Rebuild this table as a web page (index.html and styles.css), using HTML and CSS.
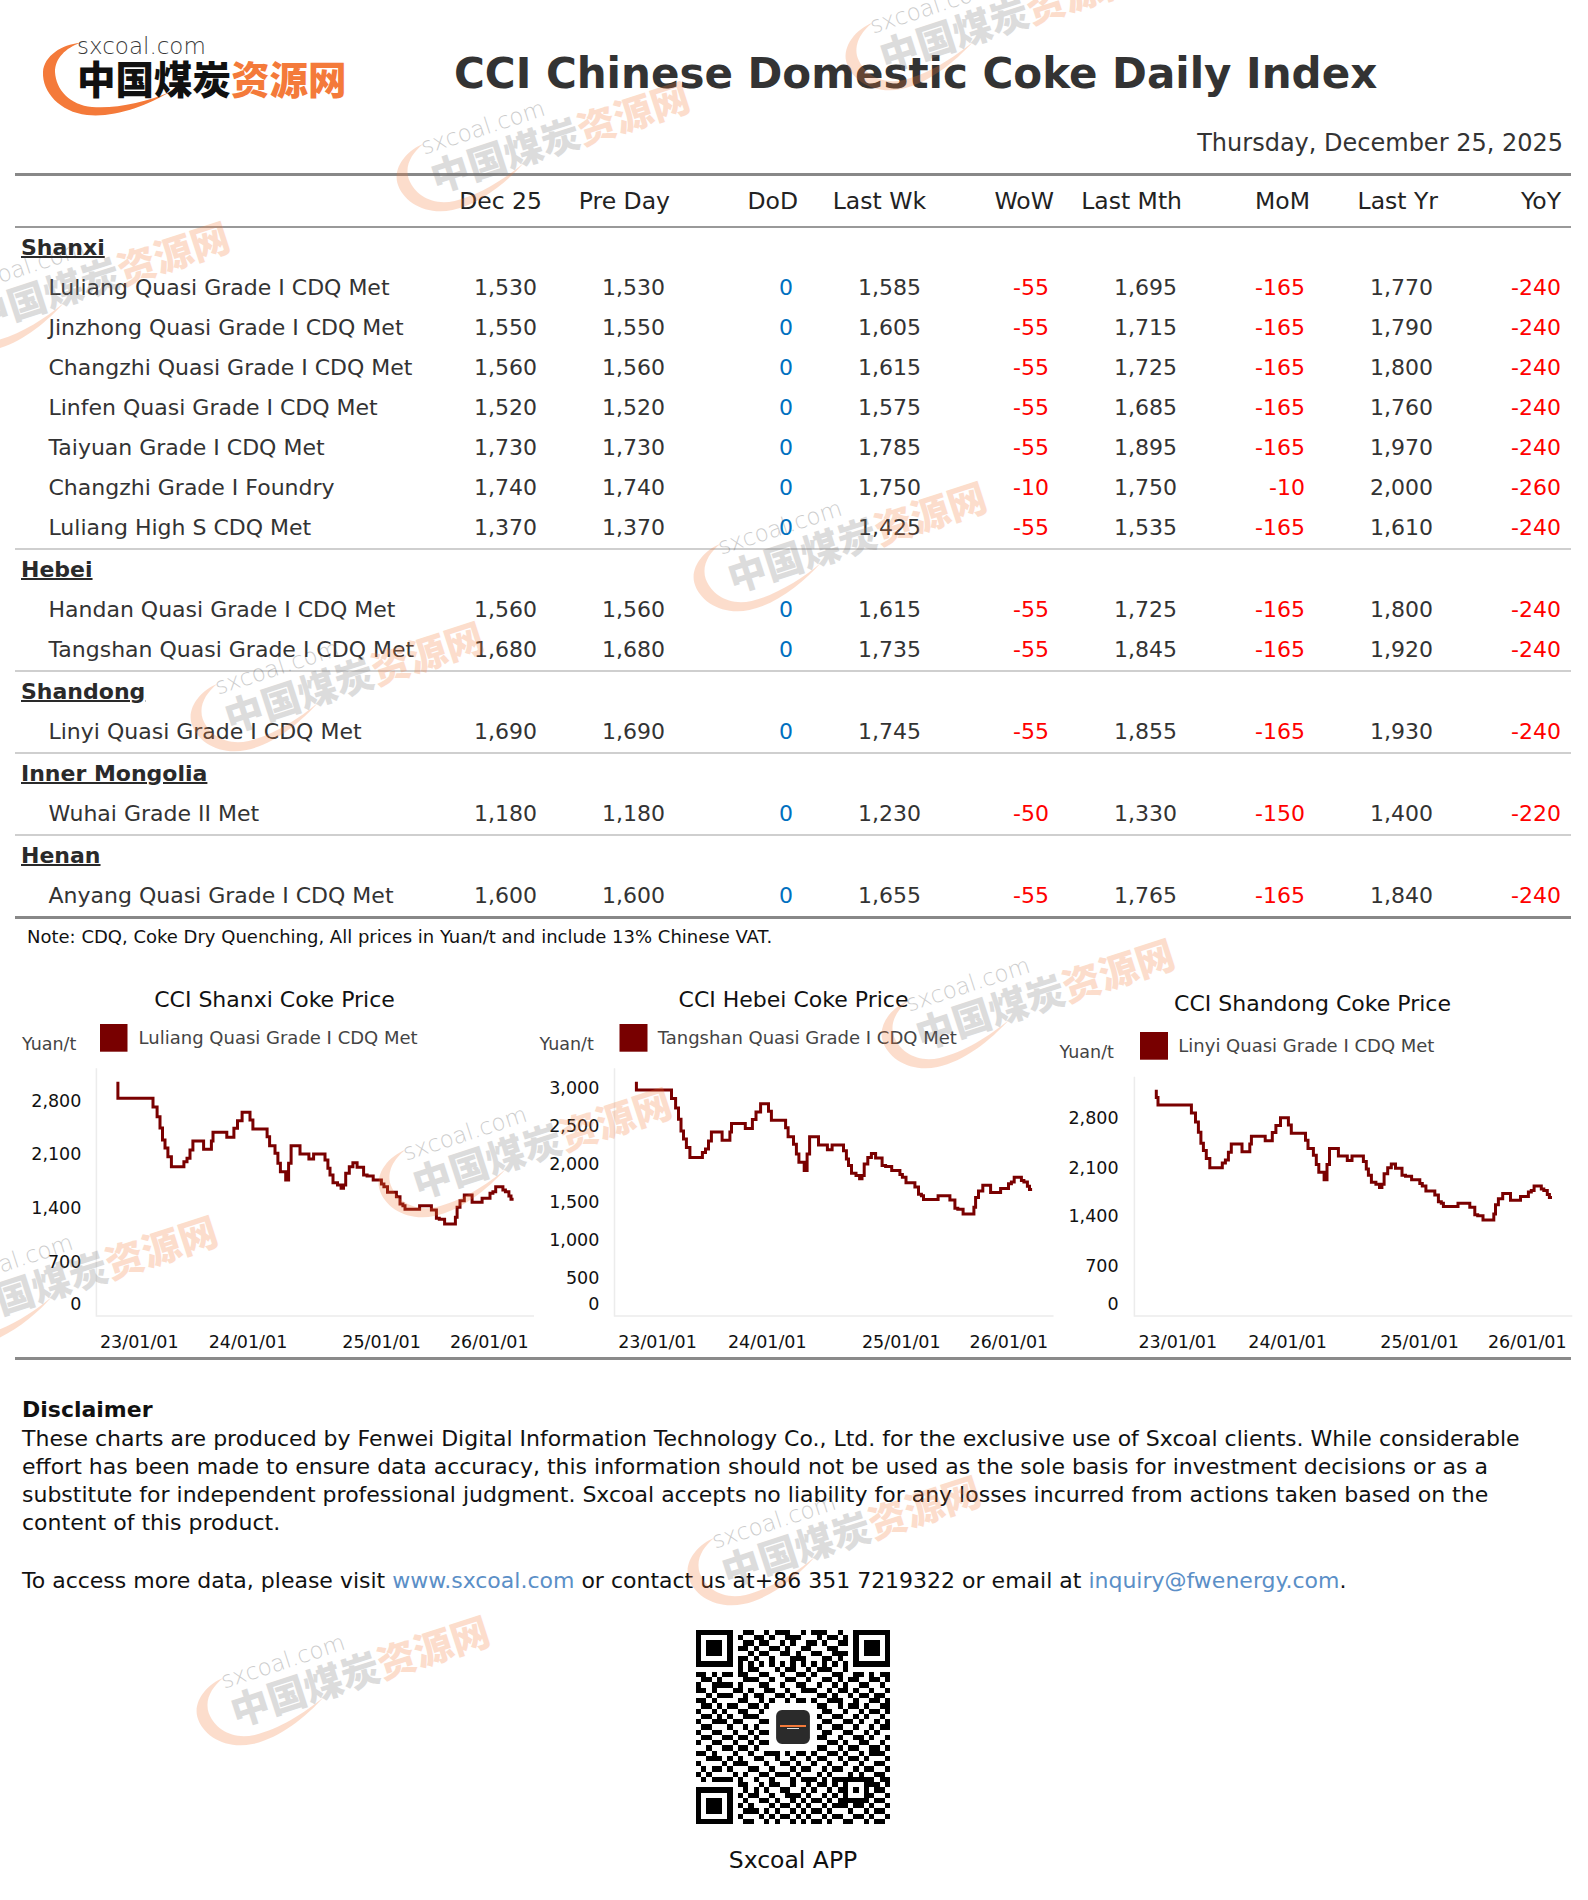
FILE: index.html
```html
<!DOCTYPE html>
<html lang="en">
<head>
<meta charset="utf-8">
<title>CCI Chinese Domestic Coke Daily Index</title>
<link rel="stylesheet" href="styles.css">
</head>
<body>
<div class="page">
  <header class="header">
    <svg class="logo" viewBox="0 0 310 84" width="310" height="84">
      <g id="sxlogo">
        <path class="lg-arc" d="M38 9 C20 10 2 22 1 38 C0 58 18 78 45 81 C72 84 104 72 128 58 C104 68 74 75 50 73 C28 71 14 56 13 38 C13 24 24 14 38 9 Z"/>
        <text class="lg-text"><tspan class="lg-url" x="35" y="19.5">sxcoal.com</tspan><tspan class="lg-cn lg-dark" x="35" y="59.5">中国煤炭</tspan><tspan class="lg-cn lg-orange">资源网</tspan></text>
      </g>
    </svg>
    <h1 class="title">CCI Chinese Domestic Coke Daily Index</h1>
  </header>
  <div class="date">Thursday, December 25, 2025</div>

  <div class="table">
    <div class="row thead">
      <div></div>
      <div class="num">Dec 25</div><div class="num">Pre Day</div><div class="num">DoD</div>
      <div class="num">Last Wk</div><div class="num">WoW</div><div class="num">Last Mth</div>
      <div class="num">MoM</div><div class="num">Last Yr</div><div class="num">YoY</div>
    </div>

    <div class="group">
      <div class="group-title"><span>Shanxi</span></div>
      <div class="row"><div class="name">Luliang Quasi Grade I CDQ Met</div><div class="num">1,530</div><div class="num">1,530</div><div class="num zero">0</div><div class="num">1,585</div><div class="num neg">-55</div><div class="num">1,695</div><div class="num neg">-165</div><div class="num">1,770</div><div class="num neg">-240</div></div>
      <div class="row"><div class="name">Jinzhong Quasi Grade I CDQ Met</div><div class="num">1,550</div><div class="num">1,550</div><div class="num zero">0</div><div class="num">1,605</div><div class="num neg">-55</div><div class="num">1,715</div><div class="num neg">-165</div><div class="num">1,790</div><div class="num neg">-240</div></div>
      <div class="row"><div class="name">Changzhi Quasi Grade I CDQ Met</div><div class="num">1,560</div><div class="num">1,560</div><div class="num zero">0</div><div class="num">1,615</div><div class="num neg">-55</div><div class="num">1,725</div><div class="num neg">-165</div><div class="num">1,800</div><div class="num neg">-240</div></div>
      <div class="row"><div class="name">Linfen Quasi Grade I CDQ Met</div><div class="num">1,520</div><div class="num">1,520</div><div class="num zero">0</div><div class="num">1,575</div><div class="num neg">-55</div><div class="num">1,685</div><div class="num neg">-165</div><div class="num">1,760</div><div class="num neg">-240</div></div>
      <div class="row"><div class="name">Taiyuan Grade I CDQ Met</div><div class="num">1,730</div><div class="num">1,730</div><div class="num zero">0</div><div class="num">1,785</div><div class="num neg">-55</div><div class="num">1,895</div><div class="num neg">-165</div><div class="num">1,970</div><div class="num neg">-240</div></div>
      <div class="row"><div class="name">Changzhi Grade I Foundry</div><div class="num">1,740</div><div class="num">1,740</div><div class="num zero">0</div><div class="num">1,750</div><div class="num neg">-10</div><div class="num">1,750</div><div class="num neg">-10</div><div class="num">2,000</div><div class="num neg">-260</div></div>
      <div class="row"><div class="name">Luliang High S CDQ Met</div><div class="num">1,370</div><div class="num">1,370</div><div class="num zero">0</div><div class="num">1,425</div><div class="num neg">-55</div><div class="num">1,535</div><div class="num neg">-165</div><div class="num">1,610</div><div class="num neg">-240</div></div>
    </div>

    <div class="group">
      <div class="group-title"><span>Hebei</span></div>
      <div class="row"><div class="name">Handan Quasi Grade I CDQ Met</div><div class="num">1,560</div><div class="num">1,560</div><div class="num zero">0</div><div class="num">1,615</div><div class="num neg">-55</div><div class="num">1,725</div><div class="num neg">-165</div><div class="num">1,800</div><div class="num neg">-240</div></div>
      <div class="row"><div class="name">Tangshan Quasi Grade I CDQ Met</div><div class="num">1,680</div><div class="num">1,680</div><div class="num zero">0</div><div class="num">1,735</div><div class="num neg">-55</div><div class="num">1,845</div><div class="num neg">-165</div><div class="num">1,920</div><div class="num neg">-240</div></div>
    </div>

    <div class="group">
      <div class="group-title"><span>Shandong</span></div>
      <div class="row"><div class="name">Linyi Quasi Grade I CDQ Met</div><div class="num">1,690</div><div class="num">1,690</div><div class="num zero">0</div><div class="num">1,745</div><div class="num neg">-55</div><div class="num">1,855</div><div class="num neg">-165</div><div class="num">1,930</div><div class="num neg">-240</div></div>
    </div>

    <div class="group">
      <div class="group-title"><span>Inner Mongolia</span></div>
      <div class="row"><div class="name">Wuhai Grade II Met</div><div class="num">1,180</div><div class="num">1,180</div><div class="num zero">0</div><div class="num">1,230</div><div class="num neg">-50</div><div class="num">1,330</div><div class="num neg">-150</div><div class="num">1,400</div><div class="num neg">-220</div></div>
    </div>

    <div class="group">
      <div class="group-title"><span>Henan</span></div>
      <div class="row"><div class="name">Anyang Quasi Grade I CDQ Met</div><div class="num">1,600</div><div class="num">1,600</div><div class="num zero">0</div><div class="num">1,655</div><div class="num neg">-55</div><div class="num">1,765</div><div class="num neg">-165</div><div class="num">1,840</div><div class="num neg">-240</div></div>
    </div>
  </div>

  <div class="note">Note: CDQ, Coke Dry Quenching, All prices in Yuan/t and include 13% Chinese VAT.</div>

  <div class="charts">
    <svg class="chart" viewBox="0 0 519 397" width="519" height="397">
      <text class="c-title" x="257.5" y="46.7" text-anchor="middle">CCI Shanxi Coke Price</text>
      <rect class="c-key" x="83" y="64" width="27.5" height="27.7"/>
      <text class="c-legend" x="121.6" y="84">Luliang Quasi Grade I CDQ Met</text>
      <text class="c-unit" x="5" y="90">Yuan/t</text>
      <g class="c-ytick" text-anchor="end">
        <text x="64.4" y="146.7">2,800</text>
        <text x="64.4" y="200">2,100</text>
        <text x="64.4" y="254.3">1,400</text>
        <text x="64.4" y="308.3">700</text>
        <text x="64.4" y="350">0</text>
      </g>
      <path class="c-axis" d="M79.4 108.3V356H517"/>
      <g class="c-xtick" text-anchor="middle">
        <text x="122.3" y="388.3">23/01/01</text>
        <text x="231" y="388.3">24/01/01</text>
        <text x="364.6" y="388.3">25/01/01</text>
        <text x="472.3" y="388.3">26/01/01</text>
      </g>
      <path class="c-line" transform="translate(-17 0)" d="M117.9 121.7V138.3H149.3H153V147H157.1V156.7H160V168H162.5V180H165V188H167.9V196.7H171.4V206.7H183.9V201.7H187V198.3H190V190H192.9V181H203.6V189.3H211.4V181H213V172.3H226.8V177.3H233.9V168.3H237.5V160.7H242.1V152.3H250V160H252.9V169H267.1V176.7H269.6V185.7H275V193.3H277.9V203.3H280.4V211.7H285.7V220H288.6V203.3H291.1V185.7H300V194H308.9V199H313.6V194H325V200H327.9V208.3H330V215H333V222.7H337.5V225H341.1V228.3H343.5V225H345.7V213.3H349.3V206.7H352.9V202.7H357.1V207.3H363.6V215H367.1V216H373.2V220H381.4V224H383.9V226.7H387.5V232.3H396.4V236.7H400V244H402.9V245.7H405V249.3H419.6V245.7H431.4V250H436.4V258.3H439.3V259.3H444.6V264H455.4V257.3H457.1V247.3H460V240.7H464.3V235H472.1V242.3H482.1V238.3H490V233.3H492.9V231.7H495.7V226.7H502.9V230H505.4V231.7H508.9V236H511V239.3H513.6"/>
    </svg>

    <svg class="chart" viewBox="0 0 519 397" width="519" height="397">
      <text class="c-title" x="257.5" y="46.7" text-anchor="middle">CCI Hebei Coke Price</text>
      <rect class="c-key" x="83.5" y="64" width="28" height="27.7"/>
      <text class="c-legend" x="121.7" y="84">Tangshan Quasi Grade I CDQ Met</text>
      <text class="c-unit" x="3.5" y="90">Yuan/t</text>
      <g class="c-ytick" text-anchor="end">
        <text x="63.3" y="134.3">3,000</text>
        <text x="63.3" y="172.3">2,500</text>
        <text x="63.3" y="210">2,000</text>
        <text x="63.3" y="248.3">1,500</text>
        <text x="63.3" y="286">1,000</text>
        <text x="63.3" y="324">500</text>
        <text x="63.3" y="350">0</text>
      </g>
      <path class="c-axis" d="M78.5 108.3V356H517.6"/>
      <g class="c-xtick" text-anchor="middle">
        <text x="121.5" y="388.3">23/01/01</text>
        <text x="231.3" y="388.3">24/01/01</text>
        <text x="365.3" y="388.3">25/01/01</text>
        <text x="472.9" y="388.3">26/01/01</text>
      </g>
      <path class="c-line" transform="translate(-17.5 -6.4) scale(1 0.986)" d="M117.9 129.9V138.3H149.3H153V147H157.1V156.7H160V168H162.5V180H165V188H167.9V196.7H171.4V206.7H183.9V201.7H187V198.3H190V190H192.9V181H203.6V189.3H211.4V181H213V172.3H226.8V177.3H233.9V168.3H237.5V160.7H242.1V152.3H250V160H252.9V169H267.1V176.7H269.6V185.7H275V193.3H277.9V203.3H280.4V211.7H285.7V220H288.6V203.3H291.1V185.7H300V194H308.9V199H313.6V194H325V200H327.9V208.3H330V215H333V222.7H337.5V225H341.1V228.3H343.5V225H345.7V213.3H349.3V206.7H352.9V202.7H357.1V207.3H363.6V215H367.1V216H373.2V220H381.4V224H383.9V226.7H387.5V232.3H396.4V236.7H400V244H402.9V245.7H405V249.3H419.6V245.7H431.4V250H436.4V258.3H439.3V259.3H444.6V264H455.4V257.3H457.1V247.3H460V240.7H464.3V235H472.1V242.3H482.1V238.3H490V233.3H492.9V231.7H495.7V226.7H502.9V230H505.4V231.7H508.9V236H511V239.3H513.6"/>
    </svg>

    <svg class="chart" viewBox="0 0 519 397" width="519" height="397">
      <text class="c-title" x="257.5" y="50.7" text-anchor="middle">CCI Shandong Coke Price</text>
      <rect class="c-key" x="85" y="72" width="28" height="27.7"/>
      <text class="c-legend" x="123.3" y="92">Linyi Quasi Grade I CDQ Met</text>
      <text class="c-unit" x="4.6" y="97.7">Yuan/t</text>
      <g class="c-ytick" text-anchor="end">
        <text x="63.6" y="164.3">2,800</text>
        <text x="63.6" y="214.3">2,100</text>
        <text x="63.6" y="262.3">1,400</text>
        <text x="63.6" y="311.7">700</text>
        <text x="63.6" y="350">0</text>
      </g>
      <path class="c-axis" d="M79.4 116.7V356H517.3"/>
      <g class="c-xtick" text-anchor="middle">
        <text x="122.8" y="388.3">23/01/01</text>
        <text x="232.6" y="388.3">24/01/01</text>
        <text x="364.6" y="388.3">25/01/01</text>
        <text x="472.3" y="388.3">26/01/01</text>
      </g>
      <path class="c-line" transform="translate(-16.6 18.5) scale(1 0.915)" d="M117.9 121.7V130H119.6V138.3H149.3H153V147H157.1V156.7H160V168H162.5V180H165V188H167.9V196.7H171.4V206.7H183.9V201.7H187V198.3H190V190H192.9V181H203.6V189.3H211.4V181H213V172.3H226.8V177.3H233.9V168.3H237.5V160.7H242.1V152.3H250V160H252.9V169H267.1V176.7H269.6V185.7H275V193.3H277.9V203.3H280.4V211.7H285.7V220H288.6V203.3H291.1V185.7H300V194H308.9V199H313.6V194H325V200H327.9V208.3H330V215H333V222.7H337.5V225H341.1V228.3H343.5V225H345.7V213.3H349.3V206.7H352.9V202.7H357.1V207.3H363.6V215H367.1V216H373.2V220H381.4V224H383.9V226.7H387.5V232.3H396.4V236.7H400V244H402.9V245.7H405V249.3H419.6V245.7H431.4V250H436.4V258.3H439.3V259.3H444.6V264H455.4V257.3H457.1V247.3H460V240.7H464.3V235H472.1V242.3H482.1V238.3H490V233.3H492.9V231.7H495.7V226.7H502.9V230H505.4V231.7H508.9V236H511V239.3H513.6"/>
    </svg>
  </div>

  <div class="rule"></div>

  <section class="disclaimer">
    <div class="disc-title">Disclaimer</div>
    <p class="disc-text">These charts are produced by Fenwei Digital Information Technology Co., Ltd. for the exclusive use of Sxcoal clients. While considerable effort has been made to ensure data accuracy, this information should not be used as the sole basis for investment decisions or as a substitute for independent professional judgment. Sxcoal accepts no liability for any losses incurred from actions taken based on the content of this product.</p>
    <p class="contact">To access more data, please visit <a href="#">www.sxcoal.com</a> or contact us at+86 351 7219322 or email at <a href="#">inquiry@fwenergy.com</a>.</p>
  </section>

  <div class="qr-block">
    <svg class="qr" viewBox="0 0 37 37" width="194" height="194">
      <path class="qr-dark" fill-rule="evenodd" d="M0 0h7v7h-7zM1 1v5h5v-5zM30 0h7v7h-7zM31 1v5h5v-5zM0 30h7v7h-7zM1 31v5h5v-5zM28 28h5v5h-5zM29 29v3h3v-3z"/>
      <path class="qr-dark" d="M2 2h3v3h-3zM32 2h3v3h-3zM2 32h3v3h-3zM30 30h1v1h-1z
M9 0h2v1h-2zM13 0h1v1h-1zM15 0h3v1h-3zM20 0h1v1h-1zM22 0h3v1h-3zM27 0h1v1h-1z
M8 1h1v1h-1zM11 1h2v1h-2zM14 1h1v1h-1zM17 1h3v1h-3zM23 1h1v1h-1zM25 1h2v1h-2zM28 1h1v1h-1z
M9 2h2v1h-2zM12 2h2v1h-2zM16 2h1v1h-1zM18 2h1v1h-1zM21 2h2v1h-2zM24 2h1v1h-1zM27 2h2v1h-2z
M8 3h2v1h-2zM11 3h1v1h-1zM14 3h2v1h-2zM17 3h1v1h-1zM20 3h2v1h-2zM25 3h2v1h-2z
M10 4h1v1h-1zM12 4h2v1h-2zM16 4h2v1h-2zM19 4h1v1h-1zM22 4h2v1h-2zM26 4h3v1h-3z
M8 5h2v1h-2zM11 5h1v1h-1zM14 5h1v1h-1zM18 5h3v1h-3zM24 5h2v1h-2zM27 5h1v1h-1z
M8 6h1v1h-1zM10 6h1v1h-1zM12 6h1v1h-1zM14 6h1v1h-1zM16 6h1v1h-1zM18 6h1v1h-1zM20 6h1v1h-1zM22 6h1v1h-1zM24 6h1v1h-1zM26 6h1v1h-1zM28 6h1v1h-1z
M8 7h1v1h-1zM10 7h2v1h-2zM15 7h1v1h-1zM17 7h2v1h-2zM21 7h1v1h-1zM23 7h3v1h-3zM28 7h1v1h-1z
M0 8h2v1h-2zM3 8h1v1h-1zM5 8h2v1h-2zM8 8h2v1h-2zM12 8h2v1h-2zM16 8h1v1h-1zM19 8h2v1h-2zM22 8h1v1h-1zM26 8h2v1h-2zM30 8h2v1h-2zM33 8h1v1h-1zM35 8h2v1h-2z
M1 9h2v1h-2zM4 9h1v1h-1zM9 9h3v1h-3zM14 9h1v1h-1zM17 9h2v1h-2zM21 9h1v1h-1zM24 9h2v1h-2zM27 9h1v1h-1zM29 9h2v1h-2zM33 9h2v1h-2zM36 9h1v1h-1z
M0 10h1v1h-1zM3 10h4v1h-4zM8 10h1v1h-1zM12 10h2v1h-2zM16 10h1v1h-1zM19 10h2v1h-2zM23 10h1v1h-1zM26 10h1v1h-1zM28 10h1v1h-1zM31 10h2v1h-2zM35 10h1v1h-1z
M0 11h2v1h-2zM3 11h1v1h-1zM7 11h2v1h-2zM10 11h1v1h-1zM13 11h2v1h-2zM17 11h1v1h-1zM20 11h3v1h-3zM25 11h1v1h-1zM27 11h2v1h-2zM30 11h1v1h-1zM33 11h1v1h-1zM36 11h1v1h-1z
M2 12h1v1h-1zM4 12h3v1h-3zM9 12h1v1h-1zM11 12h2v1h-2zM15 12h2v1h-2zM18 12h1v1h-1zM23 12h2v1h-2zM26 12h1v1h-1zM29 12h1v1h-1zM31 12h2v1h-2zM34 12h2v1h-2z
M0 13h2v1h-2zM3 13h1v1h-1zM8 13h2v1h-2zM12 13h1v1h-1zM14 13h1v1h-1zM17 13h1v1h-1zM19 13h2v1h-2zM22 13h1v1h-1zM25 13h3v1h-3zM30 13h1v1h-1zM33 13h2v1h-2zM36 13h1v1h-1z
M1 14h2v1h-2zM4 14h1v1h-1zM6 14h2v1h-2zM10 14h2v1h-2zM13 14h1v1h-1zM23 14h2v1h-2zM27 14h1v1h-1zM29 14h2v1h-2zM32 14h1v1h-1zM35 14h2v1h-2z
M0 15h1v1h-1zM3 15h1v1h-1zM5 15h1v1h-1zM8 15h2v1h-2zM12 15h1v1h-1zM24 15h2v1h-2zM28 15h1v1h-1zM31 15h1v1h-1zM33 15h2v1h-2zM36 15h1v1h-1z
M1 16h2v1h-2zM4 16h1v1h-1zM6 16h1v1h-1zM9 16h3v1h-3zM23 16h1v1h-1zM26 16h2v1h-2zM30 16h1v1h-1zM32 16h1v1h-1zM35 16h1v1h-1z
M0 17h1v1h-1zM3 17h3v1h-3zM7 17h2v1h-2zM12 17h2v1h-2zM24 17h2v1h-2zM28 17h2v1h-2zM31 17h1v1h-1zM34 17h1v1h-1zM36 17h1v1h-1z
M1 18h2v1h-2zM6 18h1v1h-1zM9 18h1v1h-1zM11 18h1v1h-1zM23 18h1v1h-1zM26 18h2v1h-2zM30 18h1v1h-1zM33 18h1v1h-1zM35 18h2v1h-2z
M0 19h1v1h-1zM3 19h2v1h-2zM7 19h1v1h-1zM10 19h1v1h-1zM12 19h2v1h-2zM24 19h2v1h-2zM28 19h2v1h-2zM32 19h1v1h-1zM34 19h1v1h-1z
M1 20h2v1h-2zM5 20h2v1h-2zM8 20h2v1h-2zM11 20h1v1h-1zM23 20h2v1h-2zM27 20h1v1h-1zM30 20h2v1h-2zM33 20h1v1h-1zM36 20h1v1h-1z
M0 21h1v1h-1zM3 21h2v1h-2zM7 21h1v1h-1zM10 21h1v1h-1zM12 21h2v1h-2zM25 21h2v1h-2zM28 21h1v1h-1zM31 21h2v1h-2zM35 21h1v1h-1z
M2 22h1v1h-1zM5 22h2v1h-2zM8 22h2v1h-2zM11 22h1v1h-1zM23 22h2v1h-2zM27 22h1v1h-1zM29 22h2v1h-2zM33 22h2v1h-2zM36 22h1v1h-1z
M0 23h2v1h-2zM3 23h1v1h-1zM7 23h1v1h-1zM10 23h1v1h-1zM13 23h3v1h-3zM17 23h1v1h-1zM19 23h2v1h-2zM22 23h1v1h-1zM25 23h2v1h-2zM28 23h1v1h-1zM31 23h1v1h-1zM33 23h3v1h-3z
M2 24h3v1h-3zM6 24h1v1h-1zM8 24h1v1h-1zM11 24h2v1h-2zM15 24h1v1h-1zM18 24h1v1h-1zM21 24h1v1h-1zM23 24h2v1h-2zM27 24h1v1h-1zM29 24h2v1h-2zM32 24h1v1h-1zM36 24h1v1h-1z
M0 25h1v1h-1zM5 25h1v1h-1zM7 25h3v1h-3zM13 25h1v1h-1zM16 25h2v1h-2zM19 25h1v1h-1zM22 25h1v1h-1zM25 25h1v1h-1zM28 25h1v1h-1zM31 25h1v1h-1zM34 25h2v1h-2z
M1 26h1v1h-1zM3 26h2v1h-2zM6 26h1v1h-1zM10 26h2v1h-2zM14 26h1v1h-1zM18 26h1v1h-1zM20 26h2v1h-2zM24 26h1v1h-1zM26 26h2v1h-2zM30 26h1v1h-1zM32 26h2v1h-2zM36 26h1v1h-1z
M0 27h1v1h-1zM2 27h1v1h-1zM7 27h1v1h-1zM9 27h1v1h-1zM12 27h2v1h-2zM15 27h3v1h-3zM19 27h1v1h-1zM23 27h1v1h-1zM25 27h1v1h-1zM29 27h1v1h-1zM31 27h1v1h-1zM34 27h2v1h-2z
M1 28h1v1h-1zM3 28h4v1h-4zM8 28h1v1h-1zM11 28h1v1h-1zM14 28h1v1h-1zM18 28h1v1h-1zM20 28h3v1h-3zM24 28h1v1h-1zM26 28h2v1h-2zM33 28h1v1h-1zM35 28h2v1h-2z
M8 29h2v1h-2zM12 29h1v1h-1zM14 29h2v1h-2zM18 29h1v1h-1zM21 29h1v1h-1zM23 29h2v1h-2zM26 29h1v1h-1zM33 29h2v1h-2zM36 29h1v1h-1z
M9 30h1v1h-1zM11 30h1v1h-1zM13 30h1v1h-1zM16 30h2v1h-2zM20 30h1v1h-1zM22 30h1v1h-1zM25 30h1v1h-1zM27 30h1v1h-1zM34 30h2v1h-2z
M8 31h1v1h-1zM10 31h2v1h-2zM14 31h1v1h-1zM17 31h3v1h-3zM21 31h1v1h-1zM24 31h1v1h-1zM26 31h1v1h-1zM33 31h1v1h-1zM36 31h1v1h-1z
M9 32h1v1h-1zM12 32h2v1h-2zM15 32h1v1h-1zM18 32h1v1h-1zM20 32h1v1h-1zM22 32h2v1h-2zM25 32h1v1h-1zM27 32h1v1h-1zM34 32h2v1h-2z
M8 33h1v1h-1zM10 33h1v1h-1zM14 33h1v1h-1zM16 33h2v1h-2zM19 33h1v1h-1zM21 33h1v1h-1zM24 33h1v1h-1zM26 33h3v1h-3zM30 33h2v1h-2zM33 33h1v1h-1zM36 33h1v1h-1z
M9 34h3v1h-3zM13 34h1v1h-1zM15 34h1v1h-1zM18 34h1v1h-1zM20 34h1v1h-1zM22 34h2v1h-2zM25 34h1v1h-1zM29 34h1v1h-1zM32 34h1v1h-1zM34 34h2v1h-2z
M8 35h1v1h-1zM12 35h1v1h-1zM14 35h1v1h-1zM16 35h2v1h-2zM19 35h1v1h-1zM21 35h1v1h-1zM24 35h1v1h-1zM26 35h2v1h-2zM30 35h2v1h-2zM33 35h1v1h-1zM36 35h1v1h-1z
M9 36h2v1h-2zM13 36h1v1h-1zM15 36h1v1h-1zM18 36h1v1h-1zM20 36h1v1h-1zM22 36h2v1h-2zM25 36h1v1h-1zM28 36h2v1h-2zM32 36h1v1h-1zM34 36h2v1h-2z"/>
      <rect class="qr-logo" x="15.1" y="15.1" width="6.8" height="6.8" rx="1.3"/>
      <rect class="qr-logo-bar" x="16.1" y="18.2" width="4.8" height="0.35"/>
      <rect class="qr-logo-bar2" x="17.4" y="18.75" width="2.2" height="0.2"/>
    </svg>
    <div class="app">Sxcoal APP</div>
  </div>

  <svg class="wm wm1" viewBox="0 0 310 84"><use href="#sxlogo"/></svg>
  <svg class="wm wm2" viewBox="0 0 310 84"><use href="#sxlogo"/></svg>
  <svg class="wm wm3" viewBox="0 0 310 84"><use href="#sxlogo"/></svg>
  <svg class="wm wm4" viewBox="0 0 310 84"><use href="#sxlogo"/></svg>
  <svg class="wm wm5" viewBox="0 0 310 84"><use href="#sxlogo"/></svg>
  <svg class="wm wm6" viewBox="0 0 310 84"><use href="#sxlogo"/></svg>
  <svg class="wm wm7" viewBox="0 0 310 84"><use href="#sxlogo"/></svg>
  <svg class="wm wm8" viewBox="0 0 310 84"><use href="#sxlogo"/></svg>
  <svg class="wm wm9" viewBox="0 0 310 84"><use href="#sxlogo"/></svg>
  <svg class="wm wm10" viewBox="0 0 310 84"><use href="#sxlogo"/></svg>
</div>
</body>
</html>
```

FILE: styles.css
```css
* { box-sizing: border-box; }

html, body {
  margin: 0;
  padding: 0;
  background: #fff;
}

body {
  font-family: "DejaVu Sans", "Noto Sans CJK SC", sans-serif;
  color: #333;
}

.page {
  position: relative;
  width: 1588px;
  min-height: 1900px;
  padding: 0 17px 0 15px;
  overflow: hidden;
}

/* ---------- header ---------- */
.header {
  display: flex;
  align-items: flex-start;
  height: 120px;
}

.logo {
  display: block;
  flex: none;
  width: 310px;
  height: 84px;
  margin: 34px 0 0 27px;
  overflow: visible;
  --dk: #111;
}

.lg-arc { fill: #f47a3a; }
.lg-url {
  font-family: "DejaVu Sans", sans-serif;
  font-weight: 200;
  font-size: 23px;
  fill: #3a3a3a;
}
.lg-cn {
  font-family: "Noto Sans CJK SC", sans-serif;
  font-weight: 900;
  font-size: 38.5px;
}
.lg-dark { fill: var(--dk); }
.lg-orange { fill: #f47a3a; }

.title {
  margin: 48.5px 0 0 102px;
  font-size: 42px;
  line-height: 50px;
  font-weight: 700;
  color: #333;
  white-space: nowrap;
}

.date {
  margin-top: 9px;
  height: 28px;
  line-height: 28px;
  font-size: 24px;
  text-align: right;
  padding-right: 8px;
  color: #333;
}

/* ---------- table ---------- */
.table {
  margin-top: 16px;
  border-top: 3px solid #888;
  border-bottom: 3px solid #888;
}

.row {
  display: grid;
  grid-template-columns: 404px repeat(9, 128px);
  height: 40px;
  line-height: 40px;
  font-size: 22px;
  color: #333;
}

.thead {
  height: 52px;
  line-height: 50px;
  font-size: 23.5px;
  color: #222;
  border-bottom: 2px solid #999;
}
.thead .num { padding-right: 5px; }
.thead .num:last-child { padding-right: 10px; }

.num {
  text-align: right;
  padding-right: 10px;
  white-space: nowrap;
}
.name {
  padding-left: 33.5px;
  white-space: nowrap;
}
.zero { color: #0070c0; }
.neg { color: #ff0000; }

.group { border-bottom: 2px solid #cfcfcf; }
.group:last-child { border-bottom: none; }

.group-title {
  height: 40px;
  line-height: 40px;
  font-size: 22px;
  font-weight: 700;
  color: #2a2a2a;
  padding-left: 6px;
}
.group-title span {
  text-decoration: underline;
  text-decoration-thickness: 2px;
}

.note {
  margin-top: 7px;
  height: 22px;
  line-height: 22px;
  font-size: 18px;
  padding-left: 12px;
  color: #111;
}

/* ---------- charts ---------- */
.charts {
  display: flex;
  margin: 12px 0 0 2px;
}
.chart {
  flex: none;
  display: block;
  width: 519px;
  height: 397px;
  overflow: visible;
  font-family: "DejaVu Sans", sans-serif;
}
.c-title { font-size: 22px; fill: #111; }
.c-key { fill: #780000; }
.c-legend { font-size: 18px; fill: #444; }
.c-unit { font-size: 17.5px; fill: #444; }
.c-ytick, .c-xtick { font-size: 17.5px; fill: #111; }
.c-axis { fill: none; stroke: #ececec; stroke-width: 1.5; }
.c-line {
  fill: none;
  stroke: #7a0000;
  stroke-width: 3;
  stroke-linejoin: miter;
  vector-effect: non-scaling-stroke;
}

.rule { border-top: 3px solid #8a8a8a; }

/* ---------- disclaimer ---------- */
.disclaimer {
  padding: 36px 0 0 7px;
  color: #111;
}
.disc-title {
  font-size: 22px;
  font-weight: 700;
  line-height: 28px;
}
.disc-text {
  margin: 1px 0 0;
  font-size: 22px;
  line-height: 27.9px;
}
.contact {
  margin: 30px 0 0;
  font-size: 22px;
  line-height: 27.9px;
  white-space: nowrap;
}
.contact a {
  color: #5b8fc7;
  text-decoration: none;
}

/* ---------- QR ---------- */
.qr-block {
  display: flex;
  flex-direction: column;
  align-items: center;
  margin-top: 35px;
}
.qr {
  display: block;
  width: 194px;
  height: 194px;
  shape-rendering: crispEdges;
}
.qr-dark { fill: #000; }
.qr-logo { fill: #2b2b2b; stroke: #fff; stroke-width: 0.35; shape-rendering: geometricPrecision; }
.qr-logo-bar { fill: #f47a3a; }
.qr-logo-bar2 { fill: #ddd; }

.app {
  margin-top: 21px;
  font-size: 23.5px;
  line-height: 30px;
  color: #111;
}

/* ---------- watermarks (overlay) ---------- */
.wm {
  position: absolute;
  width: 310px;
  height: 84px;
  overflow: visible;
  transform: rotate(-18deg);
  opacity: 0.25;
  pointer-events: none;
  --dk: #777;
}
.wm1 { left: 390px; top: 97px; }
.wm2 { left: 839px; top: -24px; }
.wm3 { left: -70px; top: 237px; }
.wm4 { left: 687px; top: 497px; }
.wm5 { left: 184px; top: 637px; }
.wm6 { left: 875px; top: 954px; }
.wm7 { left: 372px; top: 1103px; }
.wm8 { left: -82px; top: 1231px; }
.wm9 { left: 681px; top: 1491px; }
.wm10 { left: 190px; top: 1631px; }
```
